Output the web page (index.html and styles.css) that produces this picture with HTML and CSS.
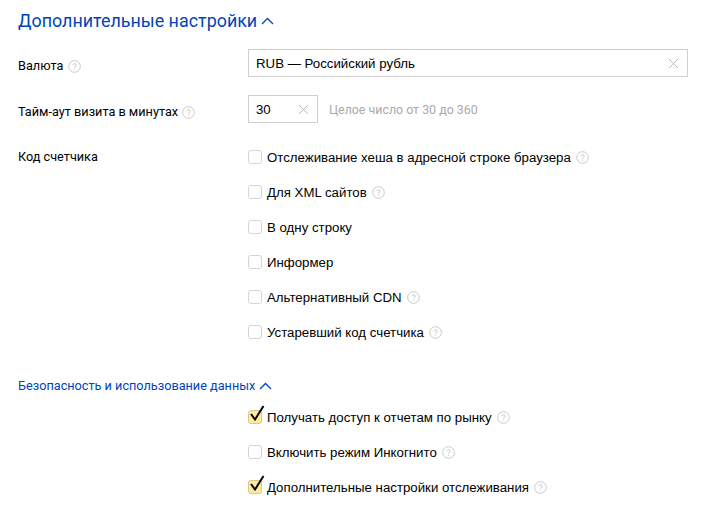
FILE: index.html
```html
<!DOCTYPE html>
<html lang="ru">
<head>
    <meta charset="UTF-8">
    <title>Дополнительные настройки</title>
    <link rel="stylesheet" href="styles.css">
</head>
<body>
    <svg class="icon-defs" width="0" height="0">
        <symbol id="hint" viewBox="0 0 13 13">
            <circle cx="6.5" cy="6.5" r="5.8" fill="none" stroke="#c9c9c9"/>
            <path d="M4.9 5.2c0-2 3.3-2 3.3-.1 0 1.200-1.600 1.300-1.600 2.600" fill="none" stroke="#c4c4c4"/>
            <path d="M6.1 8.700h1v1h-1z" fill="#c4c4c4"/>
        </symbol>
        <symbol id="cross" viewBox="0 0 12 12">
            <path d="M1 1l10 10M11 1L1 11" fill="none" stroke="#b5b5b5"/>
        </symbol>
        <symbol id="up" viewBox="0 0 13 8">
            <path d="M1 7l5.500-5.500L12 7" fill="none" stroke="currentColor" stroke-width="1.300"/>
        </symbol>
        <symbol id="tick" viewBox="0 0 17 18">
            <path d="M3 9l4 5.500L15.500 1" fill="none" stroke="#000" stroke-width="2"/>
        </symbol>
    </svg>

    <div class="settings">
        <h2 class="title">Дополнительные настройки <svg class="chevron"><use href="#up"/></svg></h2>

        <div class="row row-currency">
            <div class="label">Валюта <svg class="hint"><use href="#hint"/></svg></div>
            <div class="input input-wide">
                <span class="input-value">RUB — Российский рубль</span>
                <svg class="cross"><use href="#cross"/></svg>
            </div>
        </div>

        <div class="row row-timeout">
            <div class="label">Тайм-аут визита в минутах <svg class="hint"><use href="#hint"/></svg></div>
            <div class="input input-short">
                <span class="input-value">30</span>
                <svg class="cross"><use href="#cross"/></svg>
            </div>
            <span class="input-note">Целое число от 30 до 360</span>
        </div>

        <div class="row row-code">
            <div class="label">Код счетчика</div>
            <div class="checks">
                <div class="check"><span class="box"></span>Отслеживание хеша в адресной строке браузера <svg class="hint"><use href="#hint"/></svg></div>
                <div class="check"><span class="box"></span>Для XML сайтов <svg class="hint"><use href="#hint"/></svg></div>
                <div class="check"><span class="box"></span>В одну строку</div>
                <div class="check"><span class="box"></span>Информер</div>
                <div class="check"><span class="box"></span>Альтернативный CDN <svg class="hint"><use href="#hint"/></svg></div>
                <div class="check"><span class="box"></span>Устаревший код счетчика <svg class="hint"><use href="#hint"/></svg></div>
            </div>
        </div>

        <div class="subtitle">Безопасность и использование данных <svg class="chevron-small"><use href="#up"/></svg></div>

        <div class="row row-security">
            <div class="label"></div>
            <div class="checks">
                <div class="check"><span class="box box-on"><svg class="tick"><use href="#tick"/></svg></span>Получать доступ к отчетам по рынку <svg class="hint"><use href="#hint"/></svg></div>
                <div class="check"><span class="box"></span>Включить режим Инкогнито <svg class="hint"><use href="#hint"/></svg></div>
                <div class="check"><span class="box box-on"><svg class="tick"><use href="#tick"/></svg></span>Дополнительные настройки отслеживания <svg class="hint"><use href="#hint"/></svg></div>
            </div>
        </div>
    </div>
</body>
</html>
```
FILE: styles.css
```css
body {
    margin: 0;
    background: #fff;
    color: #000;
    font-family: Roboto, "Liberation Sans", sans-serif;
    font-size: 12.7px;
}
.icon-defs {
    display: block;
    height: 0;
}
.settings {
    width: 670px;
    padding: 9px 0 0 18px;
}
.title {
    margin: 0;
    color: #04b;
    font-size: 17.9px;
    font-weight: 400;
    line-height: 24px;
}
.chevron {
    width: 13px;
    height: 8px;
    margin-left: -1px;
    vertical-align: 2px;
}
.row {
    display: flex;
    align-items: center;
}
.row-currency {
    margin-top: 16px;
}
.row-timeout {
    margin-top: 18px;
}
.row-code {
    align-items: flex-start;
    margin-top: 24px;
}
.row-security {
    align-items: flex-start;
    margin-top: 11px;
}
.label {
    flex: 0 0 230px;
    line-height: 20px;
}
.row-currency .label,
.row-timeout .label {
    padding-top: 6px;
}
.hint {
    width: 13px;
    height: 13px;
    margin-left: 1px;
    vertical-align: -3px;
}
.input {
    display: flex;
    align-items: center;
    justify-content: space-between;
    box-sizing: border-box;
    height: 28px;
    padding: 0 8px 0 7px;
    border: 1px solid #d0d0d0;
}
.input-wide {
    width: 440px;
}
.input-short {
    width: 70px;
}
.input-value {
    font-family: "Liberation Sans", Arial, sans-serif;
    font-size: 13.25px;
}
.cross {
    width: 11px;
    height: 11px;
}
.input-note {
    margin-left: 11px;
    color: #aaa;
    font-size: 12.4px;
}
.checks {
    display: flex;
    flex-direction: column;
    gap: 15px;
}
.check {
    display: flex;
    align-items: center;
    gap: 4px;
    height: 20px;
    font-family: "Liberation Sans", Arial, sans-serif;
    font-size: 13.25px;
}
.box {
    position: relative;
    box-sizing: border-box;
    flex: none;
    width: 14px;
    height: 14px;
    margin-right: 1px;
    border: 1px solid #d4d4d4;
    border-radius: 3px;
}
.box-on {
    background: #ffeba0;
    border-color: #d8c78a;
}
.tick {
    position: absolute;
    left: -1px;
    top: -6px;
    width: 17px;
    height: 18px;
}
.subtitle {
    margin-top: 34px;
    color: #04b;
    line-height: 20px;
}
.chevron-small {
    width: 13px;
    height: 8px;
    vertical-align: 0;
}
```
